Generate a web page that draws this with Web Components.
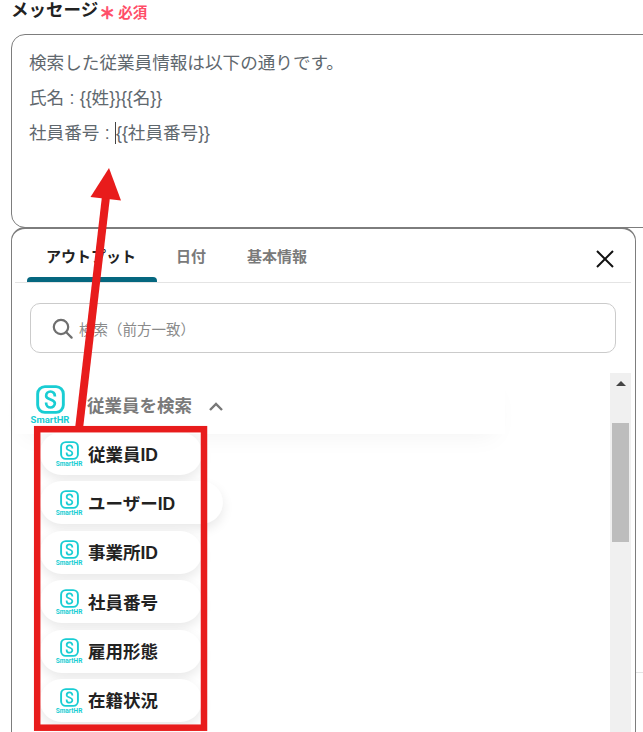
<!DOCTYPE html>
<html lang="ja">
<head>
<meta charset="utf-8">
<title>メッセージ</title>
<style>
  html, body { margin: 0; height: 732px; overflow: hidden; background: #fff; }
  body { font-family: "Liberation Sans", "Noto Sans CJK JP", sans-serif; position: relative; }
</style>
</head>
<body>

<message-field label="メッセージ">
  <message-editor>
    <p>検索した従業員情報は以下の通りです。</p>
    <p>氏名 : {{姓}}{{名}}</p>
    <p>社員番号 : <i></i>{{社員番号}}</p>
  </message-editor>
</message-field>

<output-panel>
  <output-section title="従業員を検索">
    <output-pill>従業員ID</output-pill>
    <output-pill class="wide">ユーザーID</output-pill>
    <output-pill>事業所ID</output-pill>
    <output-pill>社員番号</output-pill>
    <output-pill>雇用形態</output-pill>
    <output-pill>在籍状況</output-pill>
  </output-section>
</output-panel>

<red-note></red-note>

<script>
class MessageField extends HTMLElement {
  constructor() {
    super()
    this.attachShadow({ mode: 'open' })
  }
  connectedCallback() {
    this.shadowRoot.innerHTML = `
      <style>
        :host { display: block; padding-left: 11px; }
        .head { display: flex; align-items: center; height: 34px; padding-bottom: 14px; box-sizing: border-box; line-height: 20px; }
        .name { font-size: 17.5px; font-weight: 700; color: #222; }
        .star { font-size: 16px; font-weight: 700; color: #ff4d67; -webkit-text-stroke: .6px #ff4d67; margin-left: 1px; position: relative; top: 4px; }
        .req { font-size: 14.5px; font-weight: 700; color: #ff4d67; margin-left: 3px; position: relative; top: 3px; }
      </style>
      <div class="head">
        <span class="name">${this.getAttribute('label')}</span>
        <span class="star">＊</span>
        <span class="req">必須</span>
      </div>
      <slot></slot>`
  }
}
customElements.define('message-field', MessageField)

class MessageEditor extends HTMLElement {
  constructor() {
    super()
    this.attachShadow({ mode: 'open' })
    this.shadowRoot.innerHTML = `
      <style>
        :host {
          display: block; width: 700px; height: 194px; box-sizing: border-box;
          border: 1px solid #7d7d7d; border-radius: 14px;
          padding: 10.500px 17px; color: #5f686e; font-size: 17.600px; line-height: 35.300px; word-spacing: .5px;
        }
        ::slotted(p) { margin: 0; }
      </style>
      <slot></slot>`
  }
}
customElements.define('message-editor', MessageEditor)

class SmarthrLogo extends HTMLElement {
  constructor() {
    super()
    this.attachShadow({ mode: 'open' })
    this.shadowRoot.innerHTML = `
      <style>
        :host {
          display: inline-flex; flex-direction: column; align-items: center;
          width: var(--logo-w, 36px); color: #19cdd3; flex: none; margin-top: var(--logo-top, 4px);
        }
        svg { width: var(--logo-icon, 29px); height: var(--logo-icon, 29px); display: block; }
        span { font: 700 var(--logo-text, 9.500px)/1.1 "Roboto", sans-serif; white-space: nowrap; margin-top: 1px; }
      </style>
      <svg viewBox="0 0 28 28" fill="none" stroke="currentColor">
        <rect x="1.6" y="1.6" width="24.8" height="24.8" rx="7" stroke-width="2.8"/>
        <path d="M18.200 11V10.500a4.200 4.200 0 0 0-8.400 0c0 1.500 1 2.300 4.200 3.500s4.200 2 4.200 3.500a4.200 4.200 0 0 1-8.400 0V17" stroke-width="2.600"/>
      </svg>
      <span>SmartHR</span>`
  }
}
customElements.define('smarthr-logo', SmarthrLogo)

class OutputPanel extends HTMLElement {
  constructor() {
    super()
    this.attachShadow({ mode: 'open' })
    this.shadowRoot.innerHTML = `
      <style>
        :host {
          display: block; width: 625px; height: 560px; box-sizing: border-box; margin-left: 11px;
          margin-top: -1px; border: 1px solid #7d7d7d; border-top-width: 2px;
          border-radius: 14px 14px 0 0; background: #fff; padding: 0 4px 0 3px; position: relative;
        }
        .tabs { display: flex; height: 53px; border-bottom: 1px solid #e4e4e4; padding-left: 12px; position: relative; }
        .tab { font-size: 15px; font-weight: 700; color: #7a7a7a; line-height: 55px; }
        .tab.on { color: #222; width: 128px; padding-right: 2px; text-align: center; position: relative; }
        .tab.on::after {
          content: ""; position: absolute; left: 0; right: 0; bottom: 0; height: 5px;
          background: #05677f; border-radius: 4px 4px 0 0;
        }
        .tab.date { margin-left: 19px; }
        .tab.base { margin-left: 41px; }
        .close { position: absolute; right: 17px; top: 21px; width: 18px; height: 18px; }
        .search {
          display: flex; align-items: center; gap: 6px; height: 50px; box-sizing: border-box;
          margin: 20px 15px 20px 15px; padding-left: 21px;
          border: 1px solid #cbcbcb; border-radius: 10px; font-size: 14.5px; color: #8a8a8a;
        }
        .search svg { width: 21px; height: 21px; }
        .body { display: flex; height: 400px; }
        .list { flex: 1; min-width: 0; }
        .bar { width: 21px; background: #f0f0f0; position: relative; flex: none; }
        .bar i {
          position: absolute; left: 5.5px; top: 8px; border: 5px solid transparent; border-top: 0;
          border-bottom: 5px solid #444;
        }
        .bar b { display: block; position: absolute; left: 2px; right: 2px; top: 50px; height: 119px; background: #bdbdbd; }
      </style>
      <div class="tabs">
        <div class="tab on">アウトプット</div>
        <div class="tab date">日付</div>
        <div class="tab base">基本情報</div>
        <svg class="close" viewBox="0 0 18 18" fill="none" stroke="#111" stroke-width="2"><path d="M1 1l16 16M17 1L1 17"/></svg>
      </div>
      <div class="search">
        <svg viewBox="0 0 21 21" fill="none" stroke="#6f6f6f" stroke-width="2.2"><circle cx="9" cy="9" r="7.2"/><path d="M14 14l5.6 5.6" stroke-linecap="round"/></svg>
        <span>検索（前方一致）</span>
      </div>
      <div class="body">
        <div class="list"><slot></slot></div>
        <div class="bar"><i></i><b></b></div>
      </div>`
  }
}
customElements.define('output-panel', OutputPanel)

class OutputSection extends HTMLElement {
  constructor() {
    super()
    this.attachShadow({ mode: 'open' })
  }
  connectedCallback() {
    this.shadowRoot.innerHTML = `
      <style>
        :host { display: block; }
        .head {
          display: flex; align-items: center; height: 61px; padding: 0 0 0 17px; width: 490px;
          box-sizing: border-box; box-shadow: 0 12px 24px -10px rgba(0,0,0,.05);
        }
        .title { font-size: 17.5px; font-weight: 700; color: #7a7a7a; margin-left: 19px; margin-top: 1px; }
        svg { width: 14px; height: 9px; margin-left: 17px; margin-top: 6px; }
        .items { display: flex; flex-direction: column; align-items: flex-start; gap: 6.4px; padding-left: 25px; margin-top: -2px; }
      </style>
      <div class="head">
        <smarthr-logo></smarthr-logo>
        <span class="title">${this.getAttribute('title')}</span>
        <svg viewBox="0 0 14 9" fill="none" stroke="#777" stroke-width="2.4"><path d="M1 8l6-6 6 6"/></svg>
      </div>
      <div class="items"><slot></slot></div>`
  }
}
customElements.define('output-section', OutputSection)

class OutputPill extends HTMLElement {
  constructor() {
    super()
    this.attachShadow({ mode: 'open' })
    this.shadowRoot.innerHTML = `
      <style>
        :host {
          display: flex; align-items: center; height: 43px; box-sizing: border-box; background: #fff;
          border-radius: 22px; padding: 0 24px 1px 17px; gap: 7px; width: 162px;
          font-size: 17.5px; font-weight: 700; color: #222;
          box-shadow: 0 5px 12px rgba(0,0,0,.09);
          --logo-w: 24px; --logo-icon: 19px; --logo-text: 6.5px; --logo-top: 3px;
        }
        :host(.wide) { width: 183px; }
      </style>
      <smarthr-logo></smarthr-logo>
      <slot></slot>`
  }
}
customElements.define('output-pill', OutputPill)

// 赤い枠と矢印は画面の上に重ねる注釈
class RedNote extends HTMLElement {
  constructor() {
    super()
    this.attachShadow({ mode: 'open' })
    this.shadowRoot.innerHTML = `
      <style>
        :host { position: absolute; left: 0; top: 0; width: 643px; height: 732px; pointer-events: none; }
        svg { display: block; }
      </style>
      <svg width="643" height="732" fill="#e81c1c">
        <path d="M636 672.500h7" stroke="#e4e4e4"/>
        <path d="M75 429L102 196l8 1L83 429z"/>
        <path d="M109 168L90.500 197 121 200.500z"/>
        <rect x="37.200" y="429.200" width="166.800" height="298.500" fill="none" stroke="#e81c1c" stroke-width="6.500"/>
      </svg>`
  }
}
customElements.define('red-note', RedNote)

const caret = document.querySelector('message-editor i')
caret.style.cssText = 'display:inline-block;width:1px;height:22px;background:#444;vertical-align:-5px;'
</script>
</body>
</html>
